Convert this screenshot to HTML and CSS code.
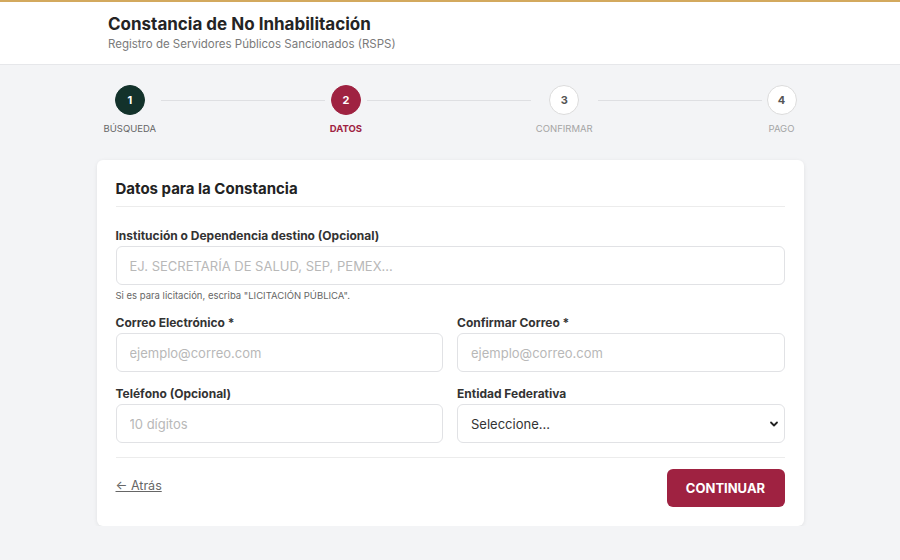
FILE: index.html
```html
<!DOCTYPE html>
<html lang="es">
	<head>
		<meta charset="utf-8" />
		<title>Constancia de No Inhabilitación</title>
		<link rel="stylesheet" href="styles.css">
	</head>
	<body>
		<!--cabecera-->
		<div class="top-bar">
			<div class="top-inner">
				<h1>Constancia de No Inhabilitación</h1>
				<p class="subtitle">Registro de Servidores Públicos Sancionados (RSPS)</p>
			</div>
		</div>

		<!--pasos-->
		<div class="stepper">
			<div class="step done">
				<div class="dot">1</div>
				<div class="step-label">Búsqueda</div>
			</div>
			<div class="line"></div>
			<div class="step active">
				<div class="dot">2</div>
				<div class="step-label">Datos</div>
			</div>
			<div class="line"></div>
			<div class="step">
				<div class="dot">3</div>
				<div class="step-label">Confirmar</div>
			</div>
			<div class="line"></div>
			<div class="step">
				<div class="dot">4</div>
				<div class="step-label">Pago</div>
			</div>
		</div>

		<!--formulario-->
		<div class="card">
			<h2 class="card-title">Datos para la Constancia</h2>
			<div class="field">
				<label for="inst">Institución o Dependencia destino (Opcional)</label>
				<input type="text" id="inst" placeholder="EJ. SECRETARÍA DE SALUD, SEP, PEMEX..." />
				<p class="hint">Si es para licitación, escriba "LICITACIÓN PÚBLICA".</p>
			</div>
			<div class="row">
				<div class="field">
					<label for="mail">Correo Electrónico *</label>
					<input type="text" id="mail" placeholder="ejemplo@correo.com" />
				</div>
				<div class="field">
					<label for="mail2">Confirmar Correo *</label>
					<input type="text" id="mail2" placeholder="ejemplo@correo.com" />
				</div>
			</div>
			<div class="row">
				<div class="field">
					<label for="tel">Teléfono (Opcional)</label>
					<input type="text" id="tel" placeholder="10 dígitos" />
				</div>
				<div class="field">
					<label for="ent">Entidad Federativa</label>
					<div class="select-wrap">
						<select id="ent">
							<option>Seleccione...</option>
						</select>
						<svg class="chevron" width="10" height="10" viewBox="0 0 10 10"><path d="M2 3.5l3 3 3-3" fill="none" stroke="#222" stroke-width="1.8" stroke-linecap="round" stroke-linejoin="round"/></svg>
					</div>
				</div>
			</div>
			<div class="actions">
				<a href="javascript:;" class="back">← Atrás</a>
				<button type="button" class="btn-primary">CONTINUAR</button>
			</div>
		</div>
	</body>
</html>
```

FILE: styles.css
```css
body,div,p,h1,h2,label,input,select,button{
	margin: 0;
	padding: 0;
}
body{
	background: #f3f4f6;
	font-family: Inter, "Liberation Sans", sans-serif;
	color: #222;
}
.top-bar{
	height: 62px;
	background: #fff;
	border-top: 2px solid #d3a95e;
	border-bottom: 1px solid #e6e7ea;
}
.top-inner{
	width: 684px;
	margin: 0 auto;
	padding-top: 11px;
}
.top-inner h1{
	font-size: 17px;
	font-weight: 700;
	line-height: 22px;
	color: #242424;
}
.subtitle{
	margin-top: 2px;
	font-size: 11.5px;
	line-height: 14px;
	color: #7a7a7a;
}
.stepper{
	display: flex;
	align-items: flex-start;
	width: 693px;
	margin: 20px auto 0;
}
.step{
	display: flex;
	flex-direction: column;
	align-items: center;
}
.dot{
	width: 28px;
	height: 28px;
	border-radius: 50%;
	border: 1.5px solid #dcdcdc;
	background: #fff;
	color: #555;
	font-size: 11px;
	font-weight: 700;
	line-height: 28px;
	text-align: center;
}
.step.done .dot{
	background: #13322b;
	border-color: #13322b;
	color: #fff;
}
.step.active .dot{
	background: #9f2241;
	border-color: #9f2241;
	color: #fff;
}
.step-label{
	margin-top: 8px;
	font-size: 9.5px;
	line-height: 12px;
	text-transform: uppercase;
	color: #a5a5a5;
}
.step.done .step-label{
	color: #666;
}
.step.active .step-label{
	color: #9f2241;
	font-weight: 700;
}
.line{
	flex: 1;
	height: 1px;
	margin: 15px 5px 0;
	background: #dedfe2;
}
.card{
	width: 669px;
	margin: 25px auto 0;
	padding: 20px 19px 19px;
	background: #fff;
	border-radius: 6px;
	box-shadow: 0 1px 4px rgba(0,0,0,0.08);
}
.card-title{
	padding-bottom: 8px;
	border-bottom: 1px solid #ececec;
	font-size: 15px;
	font-weight: 700;
	line-height: 18px;
	color: #222;
}
.field{
	display: flex;
	flex-direction: column;
	flex: 1;
	min-width: 0;
}
.card-title + .field{
	margin-top: 21px;
}
.field label{
	margin-bottom: 3px;
	font-size: 12px;
	font-weight: 700;
	line-height: 15px;
	color: #333;
}
.field input,
.field select{
	box-sizing: border-box;
	width: 100%;
	height: 39px;
	padding: 0 13px;
	border: 1px solid #e1e2e5;
	border-radius: 6px;
	background: #fff;
	font-family: inherit;
	font-size: 13px;
	color: #444;
	outline: none;
}
.field input::placeholder{
	color: #b8b8b8;
}
.hint{
	margin-top: 5px;
	font-size: 9.5px;
	line-height: 11px;
	color: #666;
}
.row{
	display: flex;
	gap: 14px;
	margin-top: 14px;
}
.row + .row{
	margin-top: 14px;
}
.select-wrap{
	position: relative;
}
.select-wrap select{
	-webkit-appearance: none;
	appearance: none;
	color: #333;
}
.chevron{
	position: absolute;
	right: 6px;
	top: 15px;
}
.actions{
	display: flex;
	justify-content: space-between;
	align-items: center;
	margin-top: 14px;
	padding-top: 11px;
	border-top: 1px solid #ececec;
}
.back{
	margin-top: -6px;
	font-size: 12.5px;
	color: #666;
	text-decoration: underline;
}
.btn-primary{
	width: 118px;
	height: 38px;
	border: 0;
	border-radius: 6px;
	background: #9f2241;
	color: #fff;
	font-family: inherit;
	font-size: 13px;
	font-weight: 700;
	cursor: pointer;
}
```
